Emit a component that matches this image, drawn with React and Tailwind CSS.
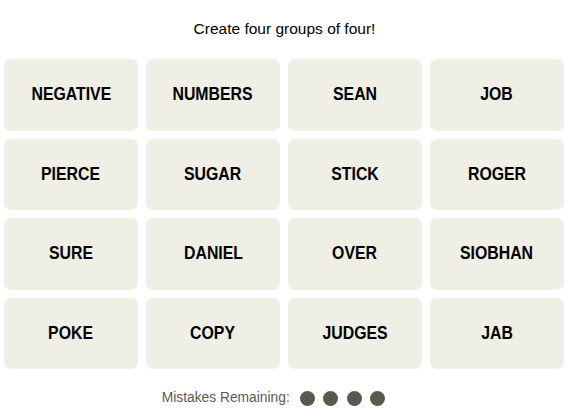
const words = [
  'NEGATIVE', 'NUMBERS', 'SEAN', 'JOB',
  'PIERCE', 'SUGAR', 'STICK', 'ROGER',
  'SURE', 'DANIEL', 'OVER', 'SIOBHAN',
  'POKE', 'COPY', 'JUDGES', 'JAB',
];

export default function App() {
  return (
    <div className="w-[569px] h-[408px] bg-white flex flex-col items-center font-['Liberation_Sans',Arial,sans-serif]">
      <p className="mt-[19px] h-[20px] text-[15.5px] leading-[20px] text-[#000]">Create four groups of four!</p>
      <div className="mt-[20px] self-start ml-[4px] grid grid-cols-4 gap-x-[8px] gap-y-[8px] w-[560px]">
        {words.map(w => (
          <div
            key={w}
            className="h-[71.5px] rounded-[7px] bg-[#efefe6] flex items-center justify-center font-bold text-[18px] text-[#000]"
          >
            <span className="inline-block scale-x-[0.88]">{w}</span>
          </div>
        ))}
      </div>
      <div className="mt-[19px] pr-[22px] flex items-center gap-[8.5px]">
        <span className="text-[13.8px] text-[#5a5a5a] mr-[1.5px]">Mistakes Remaining:</span>
        {[0, 1, 2, 3].map(i => (
          <span key={i} className="w-[15px] h-[15px] rounded-full bg-[#5a594e]" />
        ))}
      </div>
    </div>
  );
}
